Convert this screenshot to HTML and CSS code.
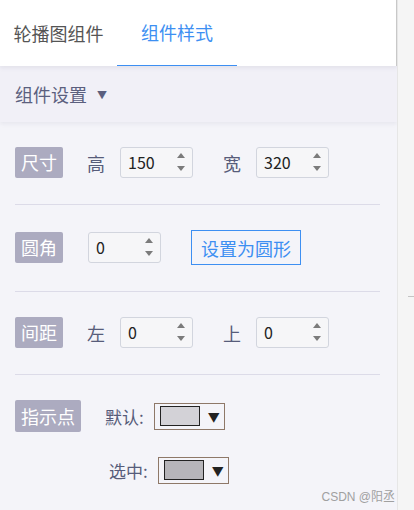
FILE: index.html
```html
<!DOCTYPE html>
<html lang="zh">
<head>
    <meta charset="UTF-8">
    <meta name="viewport" content="width=device-width, initial-scale=1.0">
    <title>组件样式</title>
    <link rel="stylesheet" href="styles.css">
</head>
<body>
    <div class="panel">
        <div class="tabs">
            <div class="tab tab-first">轮播图组件</div>
            <div class="tab tab-active">组件样式</div>
        </div>

        <div class="settings-head">组件设置 <span class="caret">▼</span></div>

        <div class="settings-body">
            <div class="section">
                <span class="badge">尺寸</span>
                <span class="label label-first">高</span>
                <div class="num-input"><span>150</span><i class="spin"></i></div>
                <span class="label">宽</span>
                <div class="num-input"><span>320</span><i class="spin"></i></div>
            </div>

            <div class="section">
                <span class="badge">圆角</span>
                <div class="num-input num-first"><span>0</span><i class="spin"></i></div>
                <button class="btn-round">设置为圆形</button>
            </div>

            <div class="section">
                <span class="badge">间距</span>
                <span class="label label-first">左</span>
                <div class="num-input"><span>0</span><i class="spin"></i></div>
                <span class="label">上</span>
                <div class="num-input"><span>0</span><i class="spin"></i></div>
            </div>

            <div class="section section-last">
                <span class="badge">指示点</span>
                <div class="dots">
                    <div class="dot-row">
                        <span class="dot-label">默认:</span>
                        <div class="picker"><span class="swatch"></span><span class="picker-arrow">▼</span></div>
                    </div>
                    <div class="dot-row dot-row-second">
                        <span class="dot-label">选中:</span>
                        <div class="picker"><span class="swatch swatch-dark"></span><span class="picker-arrow">▼</span></div>
                    </div>
                </div>
            </div>
        </div>

        <div class="watermark">CSDN @阳丞</div>
    </div>
    <div class="side">
        <div class="side-mark"></div>
    </div>
</body>
</html>
```

FILE: styles.css
```css
* { box-sizing: border-box; }

body {
    margin: 0;
    height: 510px;
    display: flex;
    background: #f5f5f5;
    font-family: "Noto Sans CJK SC", "Noto Sans", sans-serif;
    overflow: hidden;
}

.panel {
    position: relative;
    width: 397px;
    height: 510px;
    background: #f4f4f9;
    overflow: hidden;
}

.side {
    flex: 1;
    border-left: 1px solid #e6e6e6;
}
.side-mark {
    margin: 296px 0 0 10px;
    height: 1px;
    background: #c4c4c4;
}

/* tabs */
.tabs {
    display: flex;
    height: 66px;
    background: #fff;
    border-right: 1px solid #c8c8c8;
    position: relative;
    z-index: 1;
    box-shadow: 0 2px 4px rgba(120, 120, 150, 0.12);
}
.tab {
    height: 66px;
    line-height: 66px;
    font-size: 18px;
    color: #555;
    text-align: center;
}
.tab-first { width: 117px; }
.tab-active {
    width: 120px;
    color: #3d8ff2;
    border-bottom: 1px solid #3d8ff2;
    line-height: 65px;
}

/* header */
.settings-head {
    height: 56px;
    line-height: 56px;
    padding-left: 15px;
    background: #f1f0f7;
    color: #5b5f7e;
    font-size: 18px;
    box-shadow: 0 2px 4px rgba(120, 120, 150, 0.1);
    position: relative;
}
.caret {
    font-size: 10px;
    margin-left: 6px;
    vertical-align: 3px;
}

/* rows */
.settings-body { padding: 0 17px 0 15px; }
.section {
    display: flex;
    align-items: center;
    padding: 25px 0 26px;
    border-bottom: 1px solid #dcdbe8;
}
.section-last {
    align-items: flex-start;
    border-bottom: none;
}

.badge {
    height: 31px;
    line-height: 31px;
    padding: 0 6px;
    background: #acabc0;
    color: #fff;
    font-size: 18px;
    border-radius: 2px;
}
.section-last .badge { height: 32px; line-height: 32px; }

.label {
    font-size: 18px;
    color: #575c7a;
    margin: 0 15px 0 30px;
}
.label-first { margin-left: 24px; }

.num-input {
    position: relative;
    width: 73px;
    height: 31px;
    line-height: 29px;
    padding-left: 7px;
    border: 1px solid #d2d5de;
    border-radius: 3px;
    background: #f6f6f8;
    font-size: 16px;
    color: #222;
}
.num-first { margin-left: 25px; }
.spin::before,
.spin::after {
    content: "";
    position: absolute;
    right: 7px;
    border-left: 4px solid transparent;
    border-right: 4px solid transparent;
}
.spin::before {
    top: 5px;
    border-bottom: 5px solid #7b7b7b;
}
.spin::after {
    bottom: 6px;
    border-top: 5px solid #7b7b7b;
}

.btn-round {
    margin-left: 30px;
    height: 35px;
    padding: 0 9px;
    border: 1px solid #3d8ff2;
    background: transparent;
    color: #3d8ff2;
    font-family: inherit;
    font-size: 18px;
}

/* indicator */
.dots { margin-left: 24px; }
.dot-row {
    display: flex;
    align-items: center;
    height: 32px;
}
.dot-row-second {
    margin-top: 22px;
    padding-left: 4px;
}
.dot-label {
    font-size: 17px;
    color: #575c7a;
    margin-right: 10px;
}
.picker {
    display: flex;
    align-items: center;
    width: 71px;
    height: 27px;
    padding-left: 5px;
    border: 1px solid #8e7868;
}
.swatch {
    width: 40px;
    height: 20px;
    border: 1px solid #222;
    background: #d3d2d7;
}
.swatch-dark { background: #b6b5ba; }
.picker-arrow {
    margin-left: 8px;
    font-size: 12px;
    color: #222;
}

.watermark {
    position: absolute;
    right: 2px;
    top: 487px;
    font-family: "Liberation Sans", "Noto Sans CJK SC", sans-serif;
    font-size: 12px;
    color: #a0a0a0;
    white-space: nowrap;
}
```
